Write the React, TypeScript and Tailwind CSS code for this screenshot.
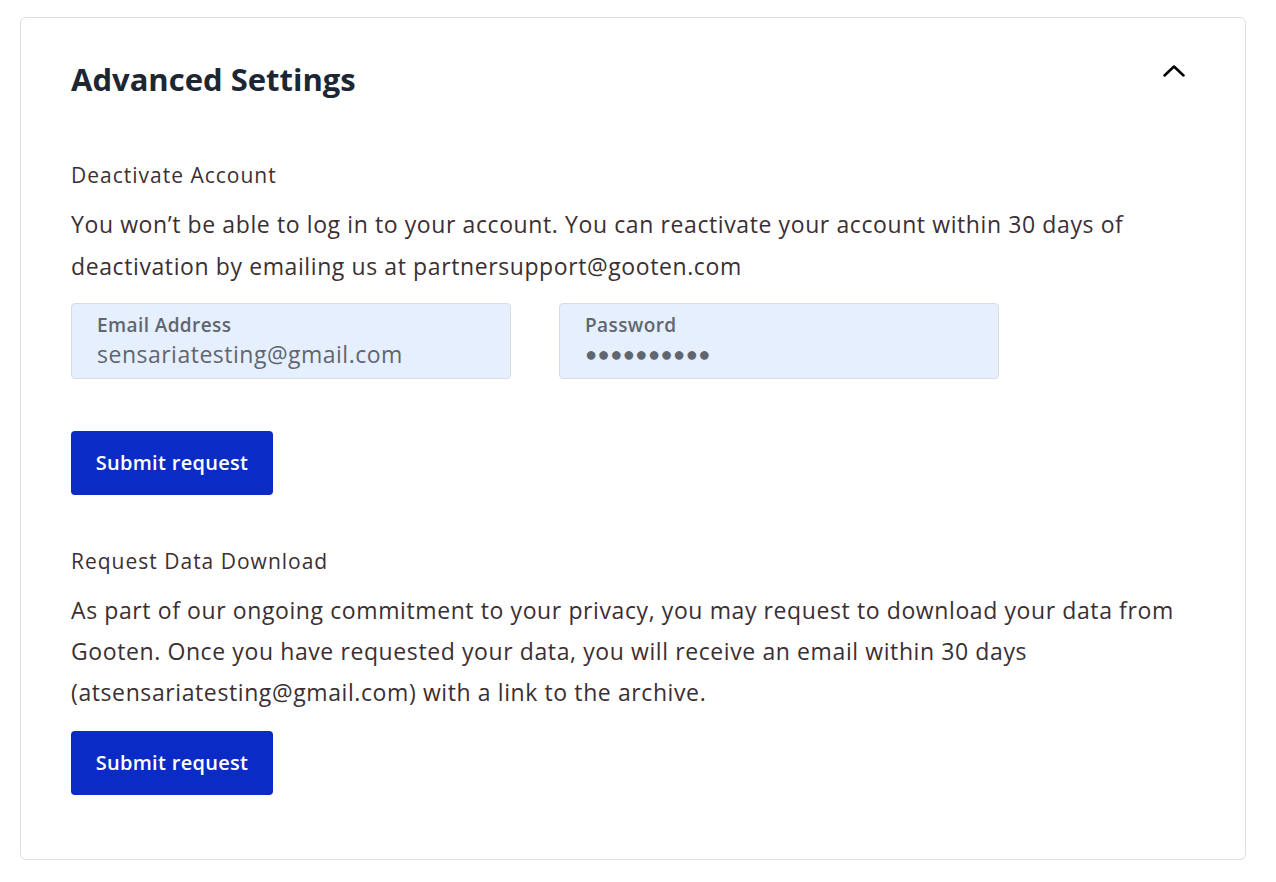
const font = { fontFamily: "'Open Sans', 'Noto Sans', sans-serif" };

function Field({ label, value, dots }: { label: string; value: string; dots?: boolean }) {
  return (
    <div className="w-[440px] h-[76px] rounded-[4px] border border-[#d9dde3] bg-[#e6effd] px-[25px] pt-[8px]">
      <div className="text-[19px] leading-[26px] font-semibold tracking-[0.4px] text-[#5f6670]">{label}</div>
      {dots ? (
        <div className="text-[20px] leading-[32px] tracking-[0.5px] text-[#5f6670]">●●●●●●●●●●</div>
      ) : (
        <div className="text-[23px] leading-[32px] tracking-[0.5px] text-[#5f6670]">{value}</div>
      )}
    </div>
  );
}

function SubmitButton() {
  return (
    <button className="w-[202px] h-[64px] rounded-[4px] bg-[#0a2bc5] text-white text-[20px] tracking-[0.3px] font-semibold">
      Submit request
    </button>
  );
}

export default function App() {
  return (
    <div className="min-h-screen bg-white pl-[20px] pt-[17px] pr-[30px]" style={font}>
      <div className="w-[1226px] h-[843px] rounded-[6px] border border-[#dedede] bg-white pl-[50px] pr-[60px] pt-[39px]">
        <div className="flex items-center justify-between">
          <h1 className="text-[31px] leading-[44px] font-bold text-[#1d2733]">Advanced Settings</h1>
          <svg width="22" height="13" viewBox="0 0 22 13" className="-mt-[18px]" fill="none">
            <polyline points="1.5,11.5 11,2.5 20.5,11.5" stroke="#000" strokeWidth="2.5" strokeLinecap="round" strokeLinejoin="round" />
          </svg>
        </div>

        <div className="mt-[59px] text-[21px] leading-[30px] tracking-[1px] text-[#3b2f33]">Deactivate Account</div>
        <p className="mt-[13px] text-[23px] leading-[42px] tracking-[0.6px] text-[#3b2f33] max-w-[1140px]">
          You won’t be able to log in to your account. You can reactivate your account within 30 days of deactivation by emailing us at partnersupport@gooten.com
        </p>

        <div className="mt-[16px] flex gap-[48px]">
          <Field label="Email Address" value="sensariatesting@gmail.com" />
          <Field label="Password" value="" dots />
        </div>

        <div className="mt-[52px]">
          <SubmitButton />
        </div>

        <div className="mt-[51px] text-[21px] leading-[30px] tracking-[1px] text-[#3b2f33]">Request Data Download</div>
        <p className="mt-[14px] text-[23px] leading-[41px] tracking-[0.6px] text-[#3b2f33] max-w-[1130px]">
          As part of our ongoing commitment to your privacy, you may request to download your data from Gooten. Once you have requested your data, you will receive an email within 30 days (atsensariatesting@gmail.com) with a link to the archive.
        </p>

        <div className="mt-[18px]">
          <SubmitButton />
        </div>
      </div>
    </div>
  );
}
